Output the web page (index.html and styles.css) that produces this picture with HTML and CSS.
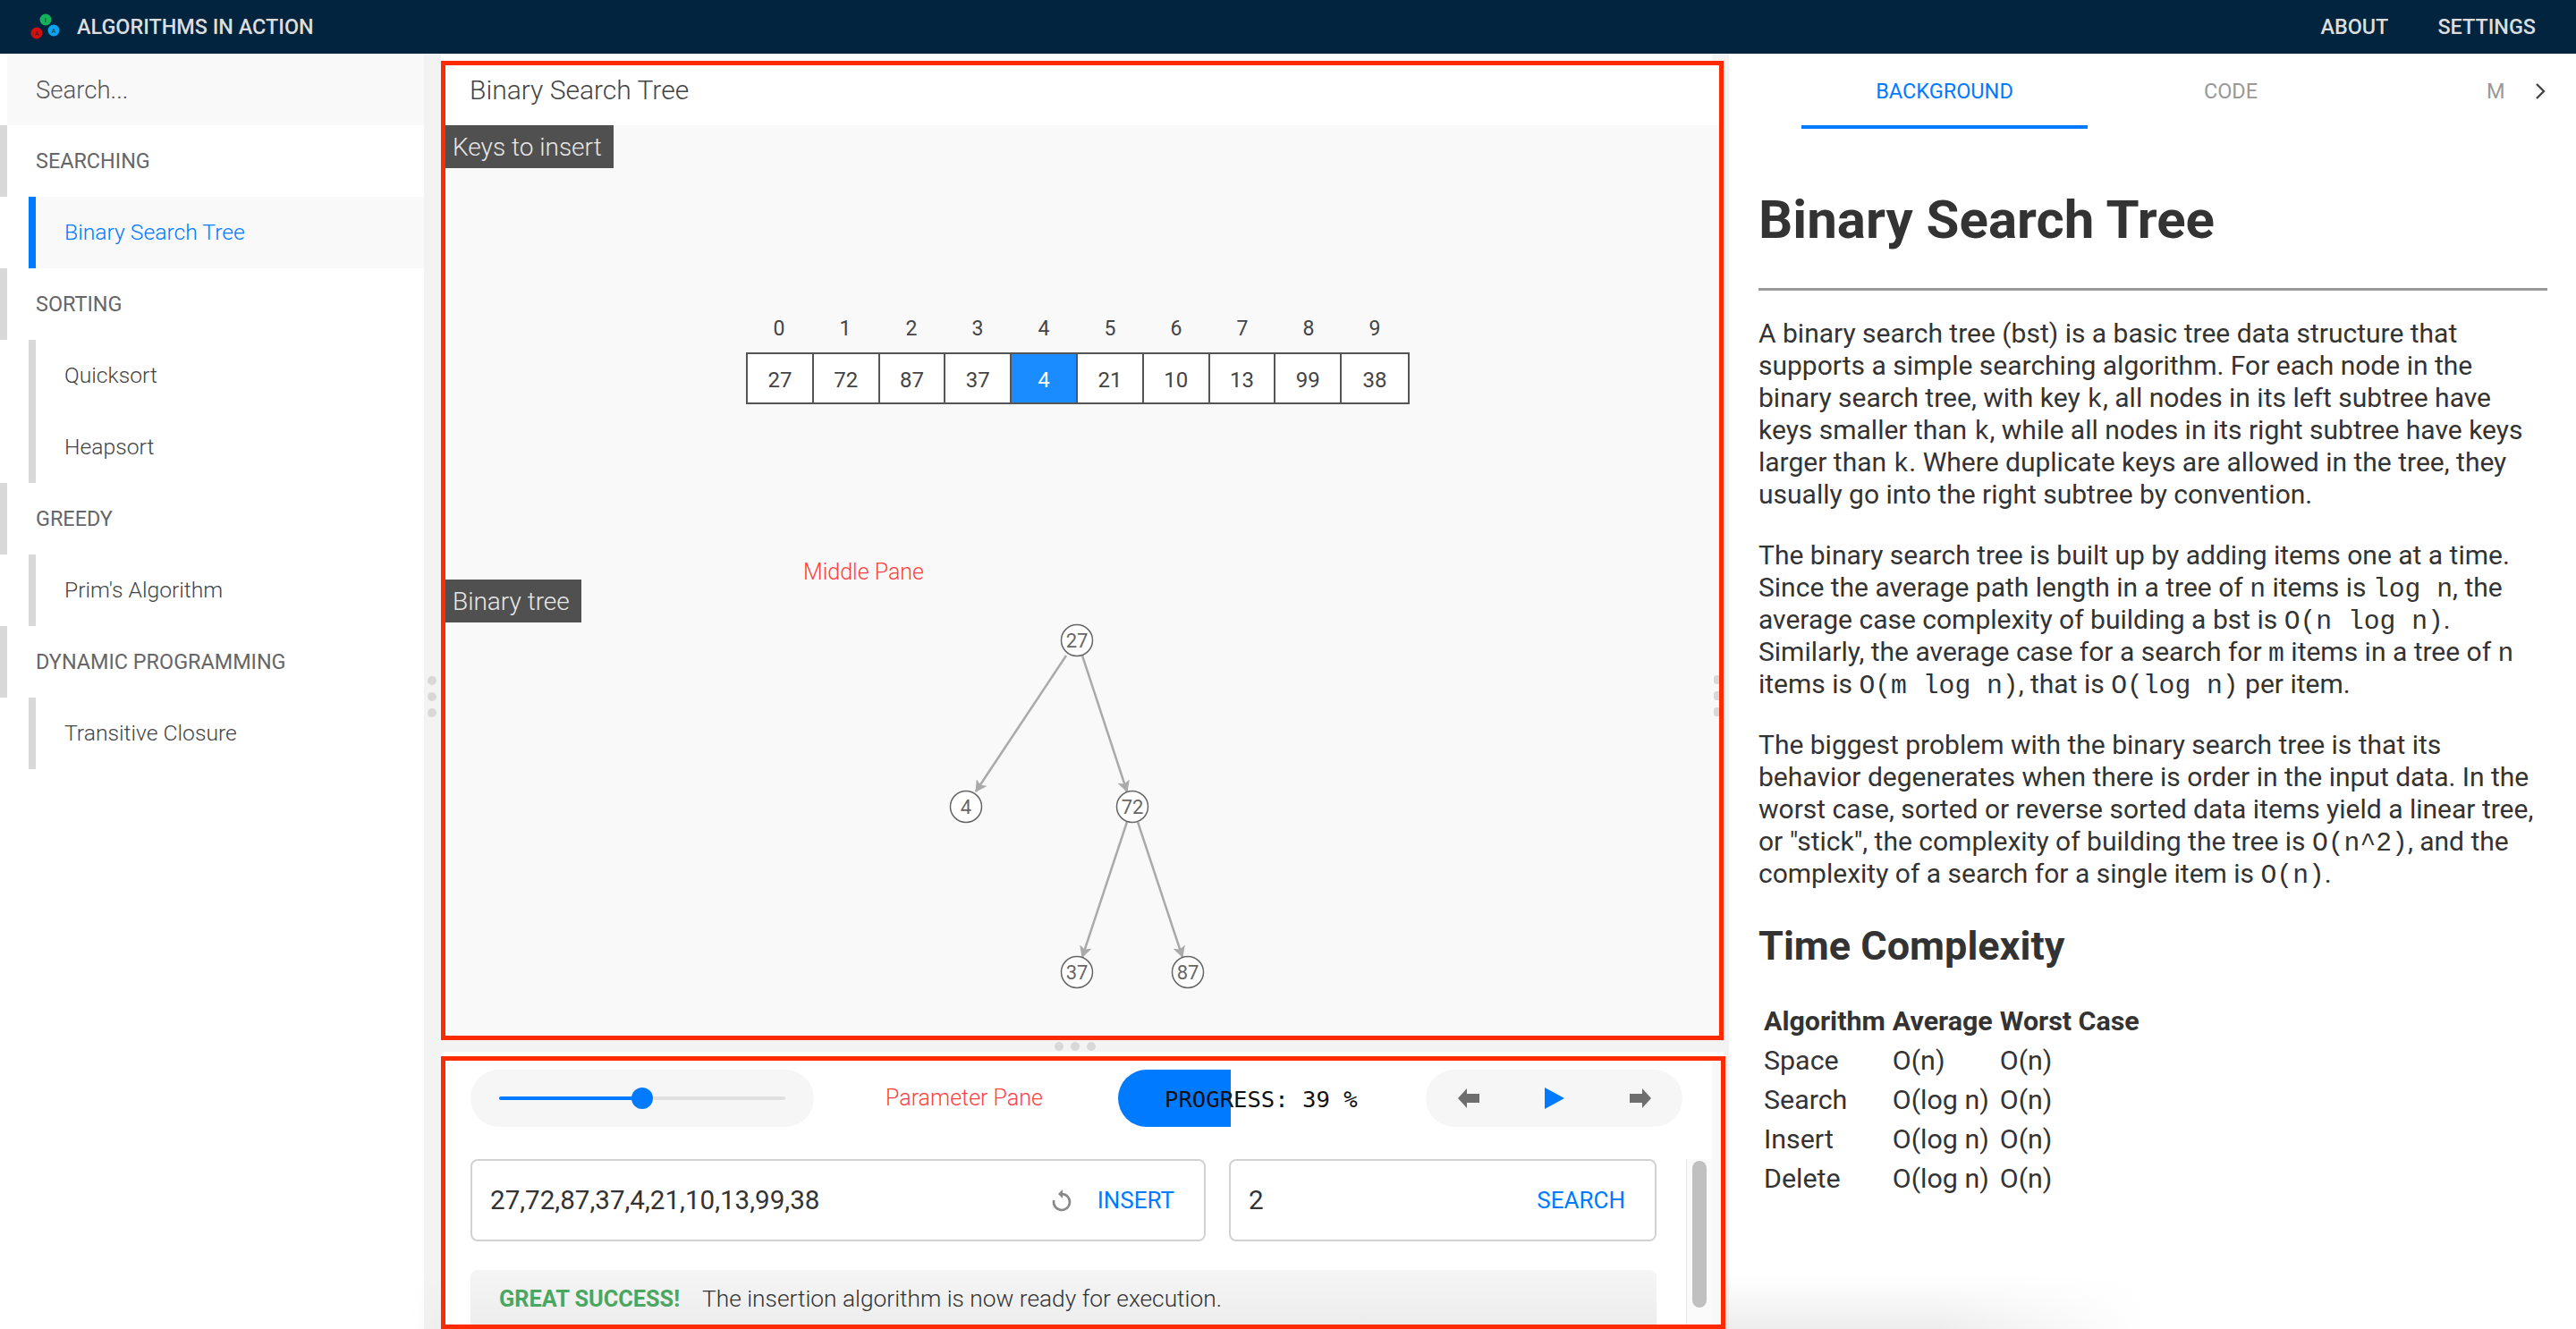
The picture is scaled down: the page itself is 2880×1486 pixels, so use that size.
FILE: index.html
```html
<!DOCTYPE html>
<html>
<head lang="en">
    <meta charset="UTF-8">
    <title>Algorithms in Action</title>
    <link rel="stylesheet" href="styles.css">
</head>
<body>
<header class="topbar">
    <div class="brand">
        <svg class="logo" width="70" height="60" viewBox="0 0 70 60">
            <circle cx="51" cy="22" r="6.5" fill="#12b35a"/>
            <circle cx="41" cy="37" r="6.5" fill="#d40f0f"/>
            <circle cx="60" cy="34" r="6.5" fill="#0aa5f0"/>
            <text x="51" y="24.5" class="logo-letter">I</text>
            <text x="41" y="39.5" class="logo-letter">A</text>
            <text x="60" y="36.5" class="logo-letter">A</text>
        </svg>
        <span class="brand-name">ALGORITHMS IN ACTION</span>
    </div>
    <nav class="topnav">
        <a>ABOUT</a>
        <a>SETTINGS</a>
    </nav>
</header>
<main class="app">
    <aside class="sidebar">
        <div class="search">Search...</div>
        <div class="group">SEARCHING</div>
        <div class="item active">Binary Search Tree</div>
        <div class="group">SORTING</div>
        <div class="item">Quicksort</div>
        <div class="item">Heapsort</div>
        <div class="group">GREEDY</div>
        <div class="item">Prim's Algorithm</div>
        <div class="group">DYNAMIC PROGRAMMING</div>
        <div class="item">Transitive Closure</div>
    </aside>
    <div class="gutter gutter-v"><i></i><i></i><i></i></div>
    <section class="centre">
        <div class="pane middle">
            <div class="pane-title">Binary Search Tree</div>
            <div class="canvas">
                <span class="tag tag-keys">Keys to insert</span>
                <div class="array">
                    <div class="indexes">
                        <span>0</span><span>1</span><span>2</span><span>3</span><span>4</span><span>5</span><span>6</span><span>7</span><span>8</span><span>9</span>
                    </div>
                    <div class="cells">
                        <span>27</span><span>72</span><span>87</span><span>37</span><span class="hot">4</span><span>21</span><span>10</span><span>13</span><span>99</span><span>38</span>
                    </div>
                </div>
                <span class="pane-note note-middle">Middle Pane</span>
                <span class="tag tag-tree">Binary tree</span>
                <svg class="tree" width="300" height="420" viewBox="1050 690 300 420">
                    <defs>
                        <marker id="head" markerWidth="14" markerHeight="14" refX="12" refY="7" orient="auto" markerUnits="userSpaceOnUse">
                            <path d="M0 0 L13 7 L0 14 L3 7 Z" fill="#aaa"/>
                        </marker>
                    </defs>
                    <line x1="1192" y1="733" x2="1091" y2="885" class="edge" marker-end="url(#head)"/>
                    <line x1="1210" y1="733" x2="1260" y2="885" class="edge" marker-end="url(#head)"/>
                    <line x1="1260" y1="919" x2="1210" y2="1070" class="edge" marker-end="url(#head)"/>
                    <line x1="1272" y1="919" x2="1322" y2="1070" class="edge" marker-end="url(#head)"/>
                    <g class="node"><circle cx="1204" cy="716" r="17.5"/><text x="1204" y="724">27</text></g>
                    <g class="node"><circle cx="1080" cy="902" r="17.5"/><text x="1080" y="910">4</text></g>
                    <g class="node"><circle cx="1266" cy="902" r="17.5"/><text x="1266" y="910">72</text></g>
                    <g class="node"><circle cx="1204" cy="1087" r="17.5"/><text x="1204" y="1095">37</text></g>
                    <g class="node"><circle cx="1328" cy="1087" r="17.5"/><text x="1328" y="1095">87</text></g>
                </svg>
            </div>
        </div>
        <div class="gutter gutter-h"><i></i><i></i><i></i></div>
        <div class="pane params">
            <div class="controls">
                <div class="pill speed">
                    <div class="track"><div class="track-fill"></div><div class="knob"></div></div>
                </div>
                <span class="pane-note note-param">Parameter Pane</span>
                <div class="progress">
                    <div class="progress-fill"></div>
                    <span class="progress-text">PROGRESS: 39 %</span>
                </div>
                <div class="pill playback">
                    <svg width="24" height="22" viewBox="0 0 24 22"><path d="M0 11 L10 0 V6 H24 V16 H10 V22 Z" fill="#6e6e6e"/></svg>
                    <svg width="22" height="24" viewBox="0 0 22 24"><path d="M0 0 L22 12 L0 24 Z" fill="#007bff"/></svg>
                    <svg width="24" height="22" viewBox="0 0 24 22"><path d="M24 11 L14 0 V6 H0 V16 H14 V22 Z" fill="#6e6e6e"/></svg>
                </div>
            </div>
            <div class="scroller">
                <div class="forms">
                    <div class="field field-insert">
                        <span class="field-value">27,72,87,37,4,21,10,13,99,38</span>
                        <svg class="refresh" width="26" height="26" viewBox="0 0 26 26">
                            <path d="M13 6 A9 9 0 1 1 4.2 13" fill="none" stroke="#888" stroke-width="2.6"/>
                            <path d="M14 1 L9 6 L14 11 Z" fill="#888"/>
                        </svg>
                        <span class="field-btn">INSERT</span>
                    </div>
                    <div class="field field-search">
                        <span class="field-value">2</span>
                        <span class="field-btn">SEARCH</span>
                    </div>
                </div>
                <div class="message"><b>GREAT SUCCESS!</b><span>The insertion algorithm is now ready for execution.</span></div>
                <div class="scrollbar"><div class="thumb"></div></div>
            </div>
        </div>
    </section>
    <div class="gutter gutter-r"><i></i><i></i><i></i></div>
    <aside class="info">
        <div class="tabs">
            <div class="tabs-row">
                <span class="tab current">BACKGROUND</span>
                <span class="tab">CODE</span>
                <span class="tab tab-cut">M</span>
            </div>
            <svg class="chevron" width="14" height="18" viewBox="0 0 14 18"><path d="M3 1 L11 9 L3 17" fill="none" stroke="#444" stroke-width="2.4"/></svg>
        </div>
        <div class="doc">
            <h1>Binary Search Tree</h1>
            <hr>
            <p>A binary search tree (bst) is a basic tree data structure that supports a simple searching algorithm. For each node in the binary search tree, with key <code>k</code>, all nodes in its left subtree have keys smaller than <code>k</code>, while all nodes in its right subtree have keys larger than <code>k</code>. Where duplicate keys are allowed in the tree, they usually go into the right subtree by convention.</p>
            <p>The binary search tree is built up by adding items one at a time. Since the average path length in a tree of <code>n</code> items is <code>log n</code>, the average case complexity of building a bst is <code>O(n log n)</code>. Similarly, the average case for a search for <code>m</code> items in a tree of <code>n</code> items is <code>O(m log n)</code>, that is <code>O(log n)</code> per item.</p>
            <p>The biggest problem with the binary search tree is that its behavior degenerates when there is order in the input data. In the worst case, sorted or reverse sorted data items yield a linear tree, or "stick", the complexity of building the tree is <code>O(n^2)</code>, and the complexity of a search for a single item is <code>O(n)</code>.</p>
            <h2>Time Complexity</h2>
            <table>
                <tr><th>Algorithm</th><th>Average</th><th>Worst Case</th></tr>
                <tr><td>Space</td><td>O(n)</td><td>O(n)</td></tr>
                <tr><td>Search</td><td>O(log n)</td><td>O(n)</td></tr>
                <tr><td>Insert</td><td>O(log n)</td><td>O(n)</td></tr>
                <tr><td>Delete</td><td>O(log n)</td><td>O(n)</td></tr>
            </table>
        </div>
    </aside>
</main>
<div class="bottom-shade"></div>
</body>
</html>
```

FILE: styles.css
```css
* {
    margin: 0;
    padding: 0;
    box-sizing: border-box;
}

html, body {
    height: 100%;
    overflow: hidden;
}

body {
    font-family: Roboto, "Liberation Sans", sans-serif;
    color: #333;
    background: #fff;
    display: flex;
    flex-direction: column;
    position: relative;
}

/* top bar */
.topbar {
    height: 60px;
    flex: none;
    background: #02243f;
    display: flex;
    align-items: center;
    justify-content: space-between;
    padding-right: 45px;
}

.brand {
    display: flex;
    align-items: center;
}

.logo {
    flex: none;
}

.logo-letter {
    font-size: 7px;
    text-anchor: middle;
    fill: #222;
}

.brand-name {
    margin-left: 16px;
    font-size: 23.4px;
    font-weight: 500;
    color: #ddd;
}

.topnav {
    display: flex;
    gap: 55px;
}

.topnav a {
    font-size: 23.4px;
    font-weight: 500;
    color: #ddd;
}

.app {
    flex: 1;
    display: flex;
    min-height: 0;
}

/* left menu */
.sidebar {
    width: 474px;
    flex: none;
    font-size: 24.7px;
    font-weight: 300;
    color: #444;
}

.search {
    height: 80px;
    margin-left: 8px;
    padding-left: 32px;
    display: flex;
    align-items: center;
    background: #f9f9f9;
    font-size: 27.5px;
    color: #555;
}

.group {
    height: 80px;
    padding-left: 32px;
    border-left: 8px solid #d8d8d8;
    display: flex;
    align-items: center;
    font-size: 23.4px;
    font-weight: 400;
    color: #666;
}

.item {
    height: 80px;
    margin-left: 32px;
    padding: 0 0 2px 32px;
    border-left: 8px solid #d8d8d8;
    display: flex;
    align-items: center;
}

.item.active {
    border-left-color: #007bff;
    background: #f9f9f9;
    color: #007bff;
}

/* drag handles */
.gutter {
    background: #f3f3f3;
    display: flex;
    flex: none;
    align-items: center;
    justify-content: center;
    gap: 8px;
}

.gutter i {
    width: 10px;
    height: 10px;
    border-radius: 50%;
    background: #d8d8d8;
}

.gutter-v {
    width: 19px;
    flex-direction: column;
    padding-top: 12px;
    padding-right: 2px;
}

.gutter-r {
    width: 6px;
    flex-direction: column;
    position: relative;
}

.gutter-r i {
    width: 6px;
    border-radius: 3px 0 0 3px;
    position: relative;
    left: -11px;
    top: 5px;
}

.gutter-r::before {
    content: "";
    position: absolute;
    top: 0;
    left: -13px;
    width: 13px;
    height: 8px;
    background: #f3f3f3;
}

.gutter-h {
    height: 13px;
    margin-right: -2px;
    padding-right: 18px;
}

/* middle column */
.centre {
    width: 1434px;
    flex: none;
    display: flex;
    flex-direction: column;
    padding-top: 8px;
}

.pane {
    border: 5px solid #ff2a00;
    background: #fff;
}

.middle {
    height: 1095px;
    flex: none;
    display: flex;
    flex-direction: column;
}

.pane-title {
    height: 67px;
    padding: 0 27px 13px;
    display: flex;
    align-items: center;
    font-size: 30px;
    font-weight: 300;
    color: #444;
}

.canvas {
    flex: 1;
    background: #f9f9f9;
    position: relative;
}

.tag {
    position: absolute;
    left: 0;
    height: 48px;
    padding: 0 8px;
    display: flex;
    align-items: center;
    background: #505050;
    color: #e8e8e8;
    font-size: 28px;
    font-weight: 300;
}

.tag-keys {
    top: 0;
    width: 188px;
}

.tag-tree {
    top: 508px;
    width: 152px;
}

.pane-note {
    color: #ff4040;
    font-size: 25px;
    font-weight: 300;
}

.note-middle {
    position: absolute;
    left: 400px;
    top: 485px;
}

.array {
    position: absolute;
    left: 336px;
    top: 210px;
    width: 742px;
    color: #444;
}

.indexes {
    display: flex;
    height: 44px;
}

.indexes span {
    width: 74px;
    text-align: center;
    font-size: 23px;
    line-height: 36px;
}

.cells {
    display: flex;
    border: 2px solid #555;
    background: #fff;
}

.cells span {
    width: 74px;
    height: 54px;
    line-height: 58px;
    text-align: center;
    font-size: 24px;
    border-right: 2px solid #555;
}

.cells span:last-child {
    border-right: 0;
}

.cells .hot {
    background: #1a8cff;
    color: #fff;
}

.tree {
    position: absolute;
    left: 552px;
    top: 550px;
}

.edge {
    stroke: #aaa;
    stroke-width: 2.5;
}

.node circle {
    fill: #fff;
    stroke: #666;
    stroke-width: 1.5;
}

.node text {
    font-size: 22px;
    text-anchor: middle;
    fill: #666;
}

/* parameter pane */
.params {
    flex: 1;
    margin-top: 5px;
    margin-right: -2px;
    padding-right: 10px;
    min-height: 0;
    display: flex;
    flex-direction: column;
    background: #f8f8f8;
    position: relative;
    z-index: 1;
}

.controls {
    height: 110px;
    flex: none;
    display: flex;
    align-items: flex-start;
    padding: 10px 0 0 28px;
    background: #fff;
}

.pill {
    height: 64px;
    border-radius: 32px;
    background: #f6f6f6;
    display: flex;
    align-items: center;
}

.speed {
    width: 384px;
    padding: 0 32px;
}

.track {
    width: 100%;
    height: 4px;
    border-radius: 2px;
    background: #e0e0e0;
    position: relative;
}

.track-fill {
    width: 160px;
    height: 100%;
    border-radius: 2px;
    background: #007bff;
}

.knob {
    position: absolute;
    left: 148px;
    top: -10px;
    width: 24px;
    height: 24px;
    border-radius: 50%;
    background: #007bff;
}

.note-param {
    margin: 17px 0 0 80px;
    width: 260px;
}

.progress {
    width: 300px;
    height: 64px;
    position: relative;
    display: flex;
    align-items: center;
}

.progress-fill {
    width: 126px;
    height: 64px;
    border-radius: 32px 0 0 32px;
    background: #007bff;
}

.progress-text {
    position: absolute;
    left: 52px;
    top: 0;
    line-height: 66px;
    font-family: "DejaVu Sans Mono", monospace;
    font-size: 25.6px;
    color: #111;
    white-space: nowrap;
}

.playback {
    width: 287px;
    margin-left: 44px;
    justify-content: space-between;
    padding: 0 35px 0 36px;
}

.scroller {
    flex: 1;
    min-height: 0;
    position: relative;
    padding: 0 0 0 28px;
    overflow: hidden;
    background: #fff;
}

.forms {
    display: flex;
    gap: 26px;
    margin-right: 62px;
}

.field {
    height: 92px;
    border: 2px solid #d2d2d2;
    border-radius: 8px;
    display: flex;
    align-items: center;
    padding: 0 33px 0 20px;
}

.field-insert {
    width: 822px;
}

.field-search {
    width: 478px;
}

.field-value {
    flex: 1;
    font-size: 29.6px;
    color: #333;
}

.refresh {
    margin-right: 27px;
}

.field-btn {
    color: #007bff;
    font-size: 26px;
}

.message {
    height: 80px;
    margin: 32px 62px 0 0;
    padding: 0 32px 16px;
    border-radius: 8px;
    background: linear-gradient(#f5f5f5, #eaeaea);
    display: flex;
    align-items: center;
    font-size: 26.3px;
    font-weight: 300;
}

.message b {
    color: #49a760;
    font-size: 25.3px;
    font-weight: 700;
    margin-right: 25px;
}

.scrollbar {
    position: absolute;
    right: 0;
    top: 0;
    bottom: 0;
    width: 29px;
    border-left: 1px solid #e8e8e8;
    background: #fafafa;
}

.thumb {
    width: 16px;
    height: 164px;
    margin: 2px 0 0 6px;
    border-radius: 8px;
    background: #c0c0c0;
}

/* right column */
.info {
    flex: 1;
    min-width: 0;
    overflow: hidden;
}

.tabs {
    height: 84px;
    display: flex;
    align-items: flex-start;
    position: relative;
    padding-left: 81px;
}

.tabs-row {
    display: flex;
    width: 790px;
    overflow: hidden;
}

.tab {
    width: 320px;
    flex: none;
    height: 84px;
    line-height: 84px;
    text-align: center;
    font-size: 23.5px;
    color: #999;
}

.tab.current {
    color: #007bff;
    border-bottom: 4px solid #007bff;
}

.tab-cut {
    text-align: left;
    padding-left: 126px;
}

.chevron {
    position: absolute;
    left: 900px;
    top: 33px;
}

.doc {
    padding: 62px 32px 0 33px;
}

h1 {
    font-size: 60px;
    font-weight: 700;
    line-height: 80px;
}

hr {
    border: 0;
    border-top: 3px solid #999;
    margin: 36px 0 30px;
}

p {
    font-size: 30px;
    line-height: 36px;
    margin-bottom: 32px;
}

code {
    font-family: "Liberation Mono", monospace;
    font-size: 29.7px;
    line-height: 0;
}

h2 {
    font-size: 45px;
    font-weight: 700;
    line-height: 56px;
    margin-top: 35px;
    margin-bottom: 33px;
}

table {
    border-collapse: collapse;
    font-size: 30.4px;
    margin-left: 2px;
}

th, td {
    text-align: left;
    padding: 4px 4px;
    height: 44px;
}

/* grey fade at the bottom edge of the window */
.bottom-shade {
    position: absolute;
    left: 460px;
    right: 480px;
    bottom: 0;
    height: 60px;
    background: linear-gradient(rgba(215, 215, 215, 0), rgba(215, 215, 215, .45));
    -webkit-mask-image: linear-gradient(90deg, transparent, #000 4%, #000 88%, transparent);
    mask-image: linear-gradient(90deg, transparent, #000 4%, #000 88%, transparent);
}
```
